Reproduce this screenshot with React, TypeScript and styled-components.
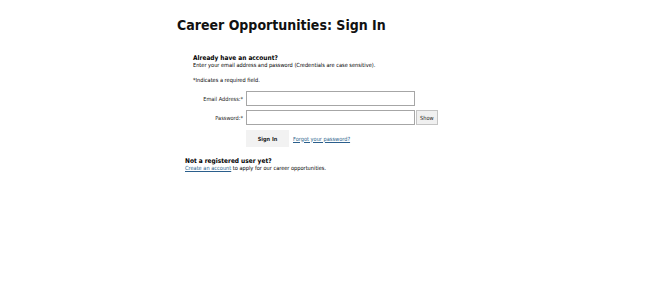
import React from 'react';
import styled, { createGlobalStyle } from 'styled-components';

const GlobalStyle = createGlobalStyle`
    html, body {
        margin: 0;
        padding: 0;
        background: #ffffff;
    }
    body {
        font-family: "DejaVu Sans Condensed", "DejaVu Sans", sans-serif;
        color: #000000;
    }
`;

const Page = styled.div`
    padding: 16px 0 0 177px;
    width: 473px;
    height: 282px;
`;

const Title = styled.h1`
    font-size: 14px;
    font-weight: bold;
    margin: 0 0 20px 0;
    line-height: 18px;
    color: #111111;
`;

const Section = styled.div<{ indent: number }>`
    padding-left: ${props => props.indent}px;
`;

const Heading = styled.h3<{ gap?: number }>`
    font-size: 6.5px;
    font-weight: bold;
    margin: ${props => props.gap || 0}px 0 0 0;
    line-height: 8px;
`;

const Note = styled.p<{ gap?: number }>`
    font-size: 5.6px;
    margin: ${props => props.gap || 0}px 0 0 0;
    line-height: 7px;
`;

const Form = styled.div`
    display: grid;
    grid-template-columns: 50px auto auto;
    justify-content: start;
    column-gap: 3px;
    row-gap: 4px;
    margin-top: 7px;
`;

const Label = styled.label`
    font-size: 5.6px;
    text-align: right;
    align-self: center;
    color: #222222;
`;

const Field = styled.input`
    width: 169px;
    height: 15px;
    box-sizing: border-box;
    border: 1px solid #a6a6a6;
    margin: 0;
    padding: 0 3px;
    background: #ffffff;
`;

const ShowButton = styled.button`
    height: 15px;
    margin-left: -2px;
    padding: 0 3px;
    border: 1px solid #c4c4c4;
    background: #f0f0f0;
    font-family: inherit;
    font-size: 5.6px;
    color: #222222;
`;

const Actions = styled.div`
    grid-column: 2 / 4;
    display: flex;
    align-items: center;
    gap: 4px;
    margin-top: 1px;
`;

const SignInButton = styled.button`
    width: 43px;
    height: 17px;
    border: none;
    background: #f2f2f2;
    font-family: inherit;
    font-size: 5.6px;
    font-weight: bold;
    color: #222222;
    padding: 0;
`;

const Link = styled.a`
    font-size: 5.6px;
    color: #2b5f8c;
    text-decoration: underline;
`;

const Spacer = styled.span``;

const App: React.FC = () => {
    return (
        <>
            <GlobalStyle />
            <Page>
                <Title>Career Opportunities: Sign In</Title>
                <Section indent={16}>
                    <Heading>Already have an account?</Heading>
                    <Note>Enter your email address and password (Credentials are case sensitive).</Note>
                    <Note gap={8}>*Indicates a required field.</Note>
                    <Form>
                        <Label>Email Address:*</Label>
                        <Field type="text" />
                        <Spacer />
                        <Label>Password:*</Label>
                        <Field type="password" />
                        <ShowButton>Show</ShowButton>
                        <Spacer />
                        <Actions>
                            <SignInButton>Sign In</SignInButton>
                            <Link href="#">Forgot your password?</Link>
                        </Actions>
                    </Form>
                </Section>
                <Section indent={8}>
                    <Heading gap={10}>Not a registered user yet?</Heading>
                    <Note>
                        <Link href="#">Create an account</Link> to apply for our career opportunities.
                    </Note>
                </Section>
            </Page>
        </>
    );
};

export default App;
